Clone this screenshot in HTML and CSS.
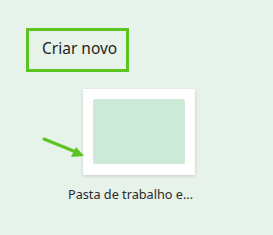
FILE: index.html
```html
<!DOCTYPE html>
<html>
<head>
<meta charset="utf-8">
<link rel="stylesheet" href="styles.css">
</head>
<body>
<div class="page">
  <div class="heading-box"><span class="heading">Criar novo</span></div>
  <div class="tiles">
    <div class="tile">
      <div class="thumb-wrap">
        <svg class="arrow" width="46" height="24" viewBox="0 0 46 24">
          <line x1="2" y1="3" x2="34" y2="16" stroke="#5cc41e" stroke-width="3" stroke-linecap="round"/>
          <polygon points="42,20 29,21 34,11" fill="#5cc41e"/>
        </svg>
        <div class="card"><div class="thumb"></div></div>
      </div>
      <div class="label">Pasta de trabalho e...</div>
    </div>
  </div>
</div>
</body>
</html>
```
FILE: styles.css
```css
html, body {
  margin: 0;
  padding: 0;
  background: #e7f2ea;
}
.page {
  width: 273px;
  height: 235px;
  padding: 28px 0 0 26px;
  box-sizing: border-box;
  font-family: "Noto Sans", "Open Sans", sans-serif;
}
.heading-box {
  width: 103px;
  height: 44px;
  box-sizing: border-box;
  border: 3px solid #5cc41e;
  display: flex;
  align-items: center;
  padding-left: 13px;
}
.heading {
  font-size: 15.5px;
  color: #1f1f1f;
  line-height: 1;
  position: relative;
  top: -1px;
}
.tiles {
  display: flex;
  padding-top: 17px;
  padding-left: 42px;
}
.tile {
  display: flex;
  flex-direction: column;
  align-items: flex-start;
}
.thumb-wrap {
  position: relative;
  margin-left: 15px;
}
.arrow {
  position: absolute;
  left: -41px;
  top: 47px;
}
.card {
  width: 112px;
  height: 86px;
  box-sizing: border-box;
  background: #ffffff;
  padding: 10px 10px 11px 10px;
  box-shadow: 0 1px 3px rgba(0,0,0,0.16);
}
.thumb {
  width: 92px;
  height: 65px;
  background: #cde9d7;
  border-radius: 2px;
}
.label {
  margin-top: 10px;
  font-size: 12.7px;
  color: #2b2b2b;
  white-space: nowrap;
}
```
